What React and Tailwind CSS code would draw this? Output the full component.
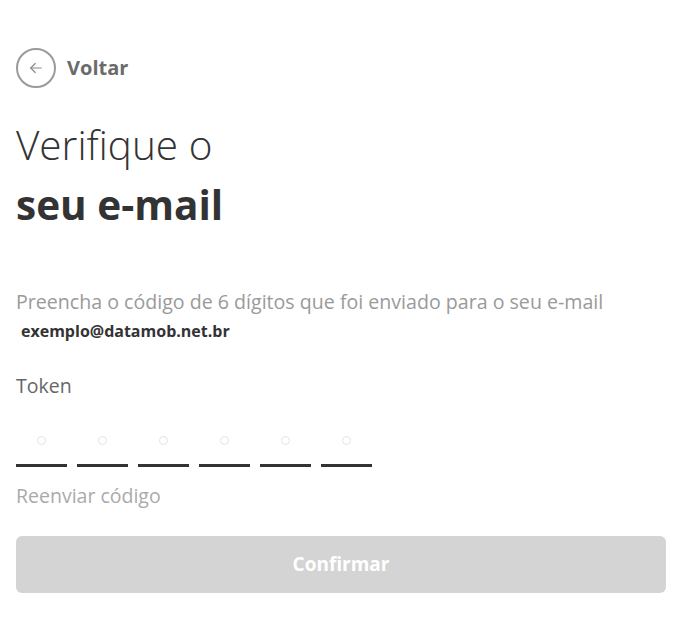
import React, { useState } from 'react';

const App = () => {
  const [digits] = useState(['', '', '', '', '', '']);

  return (
    <div className="min-h-screen bg-white pl-4 pr-3 pt-12" style={{ fontFamily: '"Open Sans", sans-serif' }}>
      {/* Back */}
      <button className="flex items-center gap-[11px]">
        <span className="flex h-10 w-10 items-center justify-center rounded-full border-2 border-[#9a9a9a]">
          <svg width="18" height="18" viewBox="0 0 24 24" fill="none" stroke="#8a8a8a" strokeWidth="1.6" strokeLinecap="round" strokeLinejoin="round">
            <path d="M19 12H5" />
            <path d="M11 6l-6 6 6 6" />
          </svg>
        </span>
        <span className="text-[20px] font-bold text-[#6b6b6b]">Voltar</span>
      </button>

      {/* Title */}
      <h1 className="mt-[27px] text-[40.5px] leading-[60px] text-[#333]">
        <span className="block font-light">Verifique o</span>
        <span className="block font-bold">seu e-mail</span>
      </h1>

      <p className="mt-[54px] text-[19.6px] font-normal text-[#9a9a9a] leading-[26px]">
        Preencha o código de 6 dígitos que foi enviado para o seu e-mail
      </p>
      <p className="mt-[5px] pl-[5px] text-[16px] font-bold text-[#333] leading-[22px]">exemplo@datamob.net.br</p>

      <label className="mt-[31px] block text-[19.5px] text-[#666] leading-[26px]">Token</label>

      <div className="mt-[37px] flex gap-[10px]">
        {digits.map((d, i) => (
          <div key={i} className="flex w-[51px] flex-col items-center">
            <span className="mb-[19px] h-[9px] w-[9px] rounded-full border border-[#e3e3e3]" />
            <span className="h-[3px] w-full bg-[#333]" />
          </div>
        ))}
      </div>

      <button className="mt-[16px] block text-[19.5px] font-normal text-[#aaa] leading-[26px]">Reenviar código</button>

      <button className="mt-[27px] flex h-[57px] w-full items-center justify-center rounded-[6px] bg-[#d4d4d4] text-[19px] font-bold text-white">
        Confirmar
      </button>
    </div>
  );
};

export default App;
